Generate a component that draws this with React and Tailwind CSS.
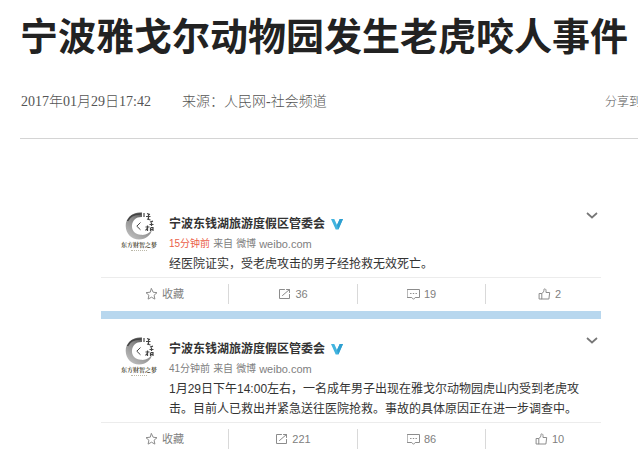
import React from "react";

const posts = [
  {
    id: "update",
    age: "15分钟前",
    fresh: true,
    text: "经医院证实，受老虎攻击的男子经抢救无效死亡。",
    shares: "36",
    comments: "19",
    likes: "2",
  },
  {
    id: "first",
    age: "41分钟前",
    fresh: false,
    text: "1月29日下午14:00左右，一名成年男子出现在雅戈尔动物园虎山内受到老虎攻击。目前人已救出并紧急送往医院抢救。事故的具体原因正在进一步调查中。",
    shares: "221",
    comments: "86",
    likes: "10",
  },
];

function Icon({ children }) {
  return (
    <svg
      className="h-3 w-[13px] shrink-0"
      viewBox="0 0 13 12"
      fill="none"
      stroke="#8c8c8c"
      strokeWidth="1"
      strokeLinejoin="round"
      strokeLinecap="round"
      aria-hidden="true"
    >
      {children}
    </svg>
  );
}

function StarIcon() {
  return (
    <Icon>
      <path d="M6.5 .7 8.1 4.2 12 4.7 9.1 7.2 9.9 11.1 6.5 9.2 3.1 11.1 3.9 7.2 1 4.7 4.9 4.2Z" />
    </Icon>
  );
}

function ShareIcon() {
  return (
    <Icon>
      <path d="M6.5 1.5H1.5V10.5H11.5V6.5M4.5 7.5 11.5 1.5M8.5 1.5H11.5V4.5" />
    </Icon>
  );
}

function CommentIcon() {
  return (
    <Icon>
      <path d="M.5 1.5H12.500V9.500H8.200L6.500 11.300 4.800 9.500H.5Z" />
      <path d="M3.500 5.500h.6M6.200 5.500h.6M8.900 5.500h.6" />
    </Icon>
  );
}

function ThumbIcon() {
  return (
    <Icon>
      <path d="M1.500 5.500H3.800V11H1.500ZM3.800 5.500C5.500 4.700 6 3.300 6 1.300 6.300.5 8 .7 8 2.500V4.500H11.700L10.900 11H3.800" />
    </Icon>
  );
}

function Avatar({ id }) {
  return (
    <div className="flex w-10 flex-col items-center">
      <svg className="h-7 w-9" viewBox="0 0 36 28" fill="none" aria-hidden="true">
        <defs>
          <linearGradient id={`ink-${id}`} x1="1" y1="0" x2="0.3" y2="1">
            <stop offset="0" stopColor="#333333" />
            <stop offset="0.45" stopColor="#858585" />
            <stop offset="1" stopColor="#bcbcbc" />
          </linearGradient>
        </defs>
        <path
          d="M21 .5C12-.5 4.500 5.500 4.700 14 5 22 10.500 27.500 18 27.500 25 27.500 30 23 31 17.500 28 21.800 24.500 23.300 20 22.800 14.200 22.300 10.500 18.500 11 13.300 11.500 8 15.500 4.700 21 5Z"
          fill={`url(#ink-${id})`}
        />
        <path d="M6.500 9C8.500 4.500 13.500 1.700 20 2" stroke="#444444" strokeWidth="1.500" />
        <path d="M19.500 10.500 15.800 14.200 19.500 17.800" stroke="#444444" strokeWidth="1" />
        <path
          d="M23 1v4M26 1.500l3 1M25 4.500h4.500M27.500 2v5M26 7l3.500 1M29 10l3-.8M28.500 12.500h4M30.500 9v5M24.500 15h4M26.500 13.500v5.500M24.500 18.500l1.500-2M29.500 15.500h2.500v3.500M29.500 16v3M29.500 17.300h2"
          stroke="#444444"
          strokeWidth="1.200"
        />
      </svg>
      <span className="whitespace-nowrap font-['Liberation_Serif','Noto_Serif_CJK_SC','Noto_Sans_CJK_SC',serif] text-[6px] leading-[10px] font-bold text-[#55533f]">
        东方财智之梦
      </span>
      <span className="w-4 border-t border-dotted border-[#bbb8a8]" />
    </div>
  );
}

function Action({ icon, label, name, className }) {
  return (
    <li className={className}>
      <button
        type="button"
        aria-label={name}
        className="flex h-5 w-full items-center justify-center gap-1 text-[11px] leading-5 text-[#808080]"
      >
        {icon}
        <span>{label}</span>
      </button>
    </li>
  );
}

function Post({ post }) {
  return (
    <article className="pt-[18px]">
      <div className="flex pl-[18px] pr-[3px]">
        <Avatar id={post.id} />
        <div className="min-w-0 flex-1 pl-[10px]">
          <div className="flex items-start justify-between">
            <h2 className="flex items-center gap-[6px] pt-0.5 text-xs leading-5 font-bold text-[#333]">
              宁波东钱湖旅游度假区管委会
              <svg className="h-3 w-3" viewBox="0 0 12 12" aria-hidden="true">
                <path d="M0 1H3.300L6 7 8.700 1H12L7.400 11.500H4.700Z" fill="#42b4df" />
                <path d="M8.700 1H12L7.400 11.500 6 7Z" fill="#2e9fd0" />
              </svg>
            </h2>
            <button type="button" aria-label="更多" className="h-[7px] w-3">
              <svg className="h-[7px] w-3" viewBox="0 0 12 7" fill="none" aria-hidden="true">
                <path d="M1 1 6 5.500 11 1" stroke="#777777" strokeWidth="1.700" />
              </svg>
            </button>
          </div>
          <p className="flex gap-[3px] text-[10px] leading-5 text-[#808080]">
            <time className={post.fresh ? "text-[#eb6048]" : ""}>{post.age}</time>
            <span>来自</span>
            <span>微博</span>
            <a href="#weibo" className="text-[11px]">
              weibo.com
            </a>
          </p>
          <p className="pr-3 text-xs leading-5 text-[#333]">{post.text}</p>
        </div>
      </div>
      <ul className="mt-[3px] grid h-[34px] grid-cols-[127fr_129fr_128fr_116fr] items-center border-t border-[#ececec] pb-0.5">
        <Action icon={<StarIcon />} label="收藏" name="收藏" />
        <Action icon={<ShareIcon />} label={post.shares} name={`转发 ${post.shares}`} className="border-l border-[#d9d9d9]" />
        <Action icon={<CommentIcon />} label={post.comments} name={`评论 ${post.comments}`} className="border-l border-[#d9d9d9]" />
        <Action icon={<ThumbIcon />} label={post.likes} name={`赞 ${post.likes}`} className="border-l border-[#d9d9d9] pl-3" />
      </ul>
    </article>
  );
}

export default function App() {
  return (
    <main className="min-h-screen overflow-hidden bg-white font-['Liberation_Sans','Noto_Sans_CJK_SC',sans-serif]">
      <header className="ml-5 border-b border-[#d4d4d4] pt-3 pb-[26px]">
        <h1 className="whitespace-nowrap text-[38px] leading-[50px] font-bold text-[#222]">
          宁波雅戈尔动物园发生老虎咬人事件
        </h1>
        <div className="mt-[30px] flex justify-between pl-px font-['Liberation_Serif','Noto_Sans_CJK_SC',serif] text-sm leading-5 font-light text-[#555]">
          <p className="flex gap-7">
            <time className="w-[133px]">2017年01月29日17:42</time>
            <span>来源：人民网-社会频道</span>
          </p>
          <span className="w-[33px] whitespace-nowrap text-xs leading-5">分享到</span>
        </div>
      </header>
      <section className="mt-[55px] mr-[37px] ml-[101px]">
        <Post post={posts[0]} />
        <div className="h-2 bg-[#b8d7ee]" />
        <Post post={posts[1]} />
      </section>
    </main>
  );
}
